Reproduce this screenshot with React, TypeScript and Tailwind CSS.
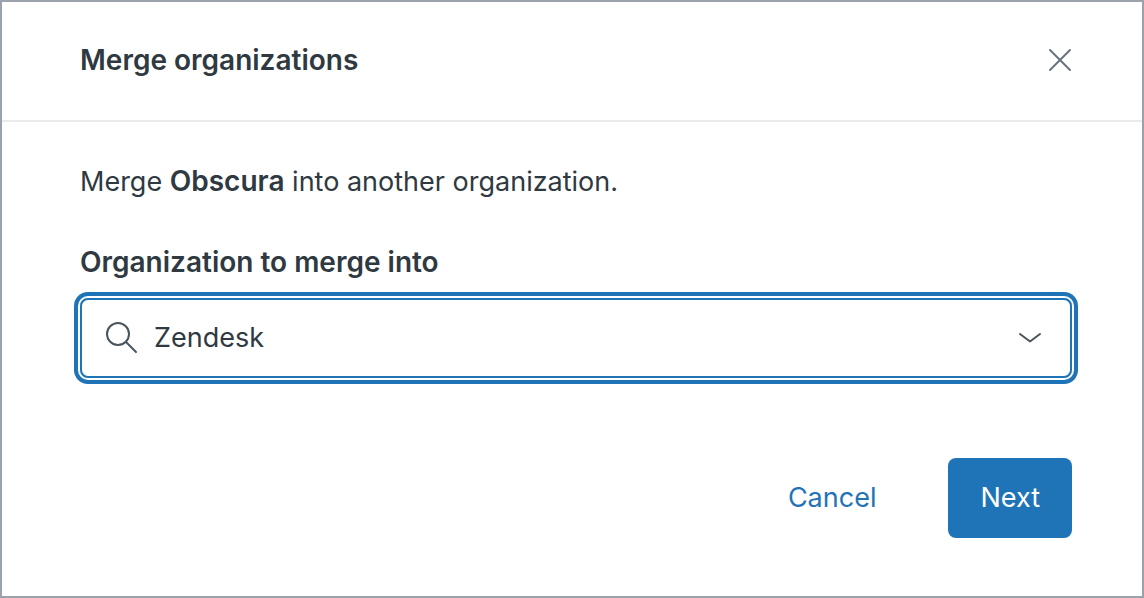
import { useState } from "react";

const CloseIcon = () => (
    <svg viewBox="0 0 32 32" className="size-8" fill="none" stroke="currentColor" strokeWidth="2" strokeLinecap="round" aria-hidden="true">
        <path d="M6 6l20 20M26 6L6 26" />
    </svg>
);

const SearchIcon = () => (
    <svg viewBox="0 0 32 32" className="size-8 shrink-0" fill="none" stroke="currentColor" strokeWidth="2" strokeLinecap="round" aria-hidden="true">
        <circle cx="12" cy="12" r="11" />
        <path d="M20 20l10 10" />
    </svg>
);

const ChevronIcon = () => (
    <svg viewBox="0 0 32 32" className="size-8" fill="none" stroke="currentColor" strokeWidth="2" strokeLinecap="round" strokeLinejoin="round" aria-hidden="true">
        <path d="M6 12l9.7 7.3a.5.5 0 0 0 .6 0L26 12" />
    </svg>
);

const App = () => {
    const [organization, setOrganization] = useState("Zendesk");

    return (
        <div
            role="dialog"
            aria-labelledby="merge-title"
            className="flex min-h-screen flex-col border-2 border-[#9ca2ac] bg-white font-['Inter',sans-serif] text-[27px] leading-10 text-[#2f3941]"
        >
            {/* Header */}
            <header className="flex items-center justify-between border-b-2 border-[#e9ebed] pt-[38px] pr-[66px] pb-10 pl-[78px]">
                <h1 id="merge-title" className="text-[28px] leading-10 font-semibold">
                    Merge organizations
                </h1>
                <button type="button" aria-label="Close" className="text-[#68737d]">
                    <CloseIcon />
                </button>
            </header>

            {/* Body */}
            <form className="pt-10 pr-[70px] pb-14 pl-[78px]" onSubmit={(e) => e.preventDefault()}>
                <p>
                    Merge <strong className="text-[28px] leading-none font-semibold">Obscura</strong> into another organization.
                </p>

                <label htmlFor="organization" className="mt-10 block text-[28px] leading-10 font-semibold">
                    Organization to merge into
                </label>
                <div className="mt-4 flex h-20 items-center gap-4 rounded-lg border-2 border-[#1f73b7] px-6 text-[#49545c] shadow-[0_0_0_2px_#fff,0_0_0_6px_#1f73b7]">
                    <SearchIcon />
                    <input
                        id="organization"
                        type="text"
                        role="combobox"
                        aria-expanded={false}
                        autoComplete="off"
                        value={organization}
                        onChange={(e) => setOrganization(e.target.value)}
                        className="min-w-0 flex-1 bg-transparent text-[#2f3941] outline-none"
                    />
                    <button type="button" aria-label="Show organizations">
                        <ChevronIcon />
                    </button>
                </div>

                {/* Actions */}
                <div className="mt-20 flex justify-end gap-10">
                    <button type="button" className="h-20 px-8 text-[#1f73b7]">
                        Cancel
                    </button>
                    <button type="submit" className="h-20 rounded-lg bg-[#1f73b7] px-8 text-white">
                        Next
                    </button>
                </div>
            </form>
        </div>
    );
};

export default App;
